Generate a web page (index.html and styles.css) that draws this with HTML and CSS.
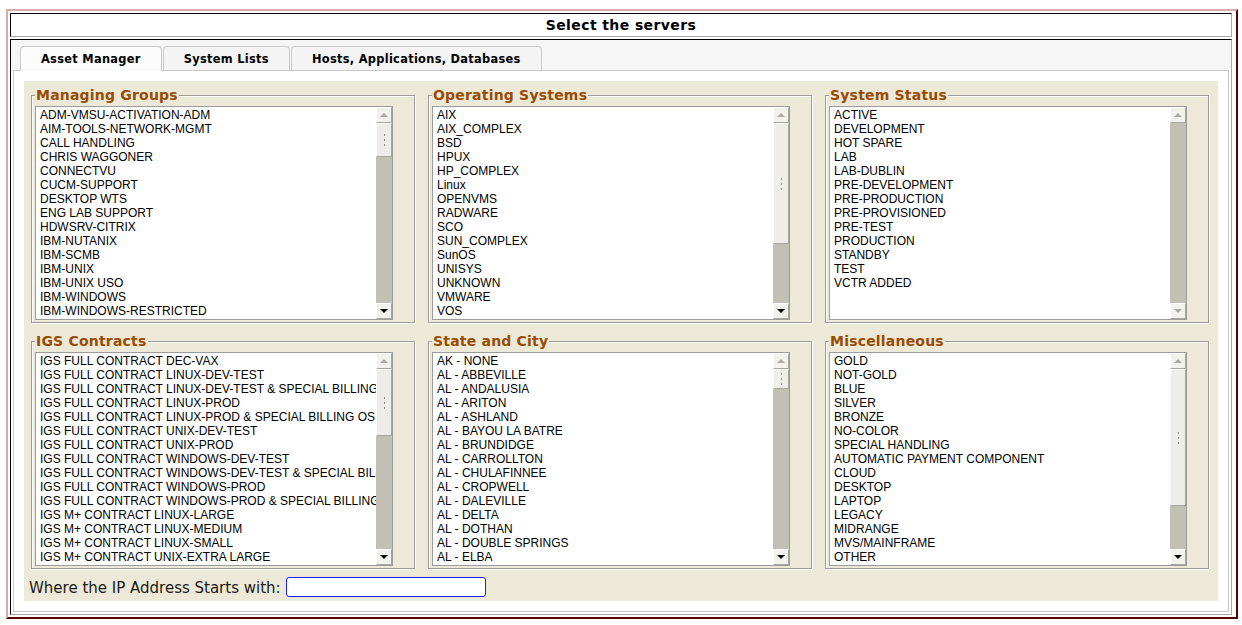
FILE: index.html
```html
<!DOCTYPE html>
<html lang="en">
<head>
    <meta charset="UTF-8">
    <title>Select the servers</title>
    <link rel="stylesheet" href="styles.css">
</head>
<body>

<div class="frame">
    <div class="title-box">Select the servers</div>

    <div class="tabs-box">
        <ul class="tab-strip">
            <li class="tab active">Asset Manager</li>
            <li class="tab">System Lists</li>
            <li class="tab">Hosts, Applications, Databases</li>
        </ul>

        <div class="tab-panel">
            <div class="filters">
                <div class="filter-grid">

                    <fieldset class="group">
                        <legend>Managing Groups</legend>
                        <div class="listbox">
                            <ul class="options">
                                <li>ADM-VMSU-ACTIVATION-ADM</li>
                                <li>AIM-TOOLS-NETWORK-MGMT</li>
                                <li>CALL HANDLING</li>
                                <li>CHRIS WAGGONER</li>
                                <li>CONNECTVU</li>
                                <li>CUCM-SUPPORT</li>
                                <li>DESKTOP WTS</li>
                                <li>ENG LAB SUPPORT</li>
                                <li>HDWSRV-CITRIX</li>
                                <li>IBM-NUTANIX</li>
                                <li>IBM-SCMB</li>
                                <li>IBM-UNIX</li>
                                <li>IBM-UNIX USO</li>
                                <li>IBM-WINDOWS</li>
                                <li>IBM-WINDOWS-RESTRICTED</li>
                            </ul>
                            <div class="scrollbar">
                                <span class="sb-btn up off"></span>
                                <span class="sb-track"><span class="sb-thumb" style="height: 34px"></span></span>
                                <span class="sb-btn down"></span>
                            </div>
                        </div>
                    </fieldset>

                    <fieldset class="group">
                        <legend>Operating Systems</legend>
                        <div class="listbox">
                            <ul class="options">
                                <li>AIX</li>
                                <li>AIX_COMPLEX</li>
                                <li>BSD</li>
                                <li>HPUX</li>
                                <li>HP_COMPLEX</li>
                                <li>Linux</li>
                                <li>OPENVMS</li>
                                <li>RADWARE</li>
                                <li>SCO</li>
                                <li>SUN_COMPLEX</li>
                                <li>SunOS</li>
                                <li>UNISYS</li>
                                <li>UNKNOWN</li>
                                <li>VMWARE</li>
                                <li>VOS</li>
                            </ul>
                            <div class="scrollbar">
                                <span class="sb-btn up off"></span>
                                <span class="sb-track"><span class="sb-thumb" style="height: 121px"></span></span>
                                <span class="sb-btn down"></span>
                            </div>
                        </div>
                    </fieldset>

                    <fieldset class="group">
                        <legend>System Status</legend>
                        <div class="listbox">
                            <ul class="options">
                                <li>ACTIVE</li>
                                <li>DEVELOPMENT</li>
                                <li>HOT SPARE</li>
                                <li>LAB</li>
                                <li>LAB-DUBLIN</li>
                                <li>PRE-DEVELOPMENT</li>
                                <li>PRE-PRODUCTION</li>
                                <li>PRE-PROVISIONED</li>
                                <li>PRE-TEST</li>
                                <li>PRODUCTION</li>
                                <li>STANDBY</li>
                                <li>TEST</li>
                                <li>VCTR ADDED</li>
                            </ul>
                            <div class="scrollbar">
                                <span class="sb-btn up off"></span>
                                <span class="sb-track"></span>
                                <span class="sb-btn down off"></span>
                            </div>
                        </div>
                    </fieldset>

                    <fieldset class="group">
                        <legend>IGS Contracts</legend>
                        <div class="listbox">
                            <ul class="options">
                                <li>IGS FULL CONTRACT DEC-VAX</li>
                                <li>IGS FULL CONTRACT LINUX-DEV-TEST</li>
                                <li>IGS FULL CONTRACT LINUX-DEV-TEST &amp; SPECIAL BILLING</li>
                                <li>IGS FULL CONTRACT LINUX-PROD</li>
                                <li>IGS FULL CONTRACT LINUX-PROD &amp; SPECIAL BILLING OS</li>
                                <li>IGS FULL CONTRACT UNIX-DEV-TEST</li>
                                <li>IGS FULL CONTRACT UNIX-PROD</li>
                                <li>IGS FULL CONTRACT WINDOWS-DEV-TEST</li>
                                <li>IGS FULL CONTRACT WINDOWS-DEV-TEST &amp; SPECIAL BILLING</li>
                                <li>IGS FULL CONTRACT WINDOWS-PROD</li>
                                <li>IGS FULL CONTRACT WINDOWS-PROD &amp; SPECIAL BILLING</li>
                                <li>IGS M+ CONTRACT LINUX-LARGE</li>
                                <li>IGS M+ CONTRACT LINUX-MEDIUM</li>
                                <li>IGS M+ CONTRACT LINUX-SMALL</li>
                                <li>IGS M+ CONTRACT UNIX-EXTRA LARGE</li>
                            </ul>
                            <div class="scrollbar">
                                <span class="sb-btn up off"></span>
                                <span class="sb-track"><span class="sb-thumb" style="height: 67px"></span></span>
                                <span class="sb-btn down"></span>
                            </div>
                        </div>
                    </fieldset>

                    <fieldset class="group">
                        <legend>State and City</legend>
                        <div class="listbox">
                            <ul class="options">
                                <li>AK - NONE</li>
                                <li>AL - ABBEVILLE</li>
                                <li>AL - ANDALUSIA</li>
                                <li>AL - ARITON</li>
                                <li>AL - ASHLAND</li>
                                <li>AL - BAYOU LA BATRE</li>
                                <li>AL - BRUNDIDGE</li>
                                <li>AL - CARROLLTON</li>
                                <li>AL - CHULAFINNEE</li>
                                <li>AL - CROPWELL</li>
                                <li>AL - DALEVILLE</li>
                                <li>AL - DELTA</li>
                                <li>AL - DOTHAN</li>
                                <li>AL - DOUBLE SPRINGS</li>
                                <li>AL - ELBA</li>
                            </ul>
                            <div class="scrollbar">
                                <span class="sb-btn up off"></span>
                                <span class="sb-track"><span class="sb-thumb" style="height: 20px"></span></span>
                                <span class="sb-btn down"></span>
                            </div>
                        </div>
                    </fieldset>

                    <fieldset class="group">
                        <legend>Miscellaneous</legend>
                        <div class="listbox">
                            <ul class="options">
                                <li>GOLD</li>
                                <li>NOT-GOLD</li>
                                <li>BLUE</li>
                                <li>SILVER</li>
                                <li>BRONZE</li>
                                <li>NO-COLOR</li>
                                <li>SPECIAL HANDLING</li>
                                <li>AUTOMATIC PAYMENT COMPONENT</li>
                                <li>CLOUD</li>
                                <li>DESKTOP</li>
                                <li>LAPTOP</li>
                                <li>LEGACY</li>
                                <li>MIDRANGE</li>
                                <li>MVS/MAINFRAME</li>
                                <li>OTHER</li>
                            </ul>
                            <div class="scrollbar">
                                <span class="sb-btn up off"></span>
                                <span class="sb-track"><span class="sb-thumb" style="height: 137px"></span></span>
                                <span class="sb-btn down"></span>
                            </div>
                        </div>
                    </fieldset>

                </div>

                <div class="ip-row">
                    <label for="ipStart">Where the IP Address Starts with:</label>
                    <input type="text" id="ipStart">
                </div>
            </div>
        </div>
    </div>
</div>

</body>
</html>
```

FILE: styles.css
```css
body {
    margin: 0;
    background: #fff;
    font-family: "DejaVu Sans", Verdana, sans-serif;
    color: #000;
}

.frame {
    box-sizing: border-box;
    width: 1232px;
    margin: 9px 0 0 6px;
    padding: 2px 4px 2px 2px;
    border: 2px solid;
    border-color: #d9abab #5e0000 #5e0000 #d9abab;
    background: #fff;
}

.title-box {
    box-sizing: border-box;
    height: 24px;
    margin-bottom: 2px;
    padding-top: 1px;
    border: 1px solid;
    border-color: #000 #a8a8a8 #a8a8a8 #000;
    font-size: 14px;
    font-weight: bold;
    letter-spacing: 0.4px;
    line-height: 21px;
    text-align: center;
}

.tabs-box {
    border: 1px solid;
    border-color: #000 #a8a8a8 #a8a8a8 #000;
    background: #fff;
    padding-bottom: 2px;
}

/* tab headers */
.tab-strip {
    display: flex;
    align-items: flex-end;
    gap: 1px;
    list-style: none;
    margin: 0;
    padding: 6px 0 0 9px;
    background: #f6f6f6;
}

.tab {
    box-sizing: border-box;
    height: 24px;
    padding: 2px 20px 0;
    border: 1px solid #c9c9c9;
    border-bottom: 0;
    border-radius: 4px 4px 0 0;
    background: #f4f4f4;
    font-size: 11.4px;
    font-weight: bold;
    letter-spacing: 0.3px;
    line-height: 20px;
}

.tab.active {
    height: 25px;
    margin-bottom: -1px;
    background: #fcfcfc;
    position: relative;
    z-index: 1;
}

.tab-panel {
    margin: 0 2px;
    padding: 10px;
    border: 1px solid #c9c9c9;
    background: #fff;
}

.filters {
    background: #ece9d8;
    padding: 6px 0 4px;
}

.filter-grid {
    display: grid;
    grid-template-columns: repeat(3, 384px);
    column-gap: 13px;
    row-gap: 10px;
    margin-left: 7px;
}

/* fieldsets */
.group {
    margin: 0;
    min-width: 0;
    padding: 3px 3px 2px;
    border: 1px solid #9e9c94;
    box-shadow: inset 1px 1px 0 #fff, 1px 1px 0 #fff;
}

.group legend {
    padding: 0 1px;
    background: #ece9d8;
    color: #994c00;
    font-size: 14px;
    font-weight: bold;
    letter-spacing: 0.2px;
    line-height: 16px;
}

/* list boxes */
.listbox {
    display: flex;
    box-sizing: border-box;
    width: 358px;
    height: 214px;
    border: 1px solid #9c9c9c;
    background: #fff;
}

.options {
    flex: 1;
    min-width: 0;
    overflow: hidden;
    list-style: none;
    margin: 0;
    padding: 1px 0 0 4px;
    font-family: "Liberation Sans", Arial, sans-serif;
    font-size: 12px;
    line-height: 14px;
    white-space: nowrap;
}

.scrollbar {
    display: flex;
    flex-direction: column;
    width: 16px;
    background: #c2bfb5;
}

.sb-btn {
    display: flex;
    align-items: center;
    justify-content: center;
    box-sizing: border-box;
    height: 16px;
    border: 1px solid;
    border-color: #fff #a6a59e #a6a59e #fff;
    background: #f2f1ec;
}

.sb-btn::after {
    content: "";
    border-left: 4px solid transparent;
    border-right: 4px solid transparent;
}

.sb-btn.up::after {
    border-bottom: 4px solid #000;
}

.sb-btn.down::after {
    border-top: 4px solid #000;
}

.sb-btn.off.up::after {
    border-bottom-color: #aaa9a2;
}

.sb-btn.off.down::after {
    border-top-color: #aaa9a2;
}

.sb-track {
    flex: 1;
    display: flex;
    flex-direction: column;
}

.sb-thumb {
    display: flex;
    align-items: center;
    justify-content: center;
    box-sizing: border-box;
    border: 1px solid;
    border-color: #fff #a6a59e #a6a59e #fff;
    background: #eeede8;
}

.sb-thumb::after {
    content: "";
    width: 1px;
    height: 2px;
    background: #8e8d88;
    box-shadow: 1px 1px 0 #fff, 0 -5px 0 #8e8d88, 1px -4px 0 #fff, 0 5px 0 #8e8d88, 1px 6px 0 #fff;
}

/* ip filter */
.ip-row {
    display: flex;
    align-items: center;
    gap: 5px;
    height: 20px;
    margin: 8px 0 0 5px;
}

.ip-row label {
    padding-top: 1px;
    font-size: 15px;
    color: #1a1a1a;
}

.ip-row input {
    box-sizing: border-box;
    width: 200px;
    height: 20px;
    margin: 0;
    border: 1px solid #1c1cf0;
    border-radius: 3px;
    background: #fff;
    outline: none;
}
```
